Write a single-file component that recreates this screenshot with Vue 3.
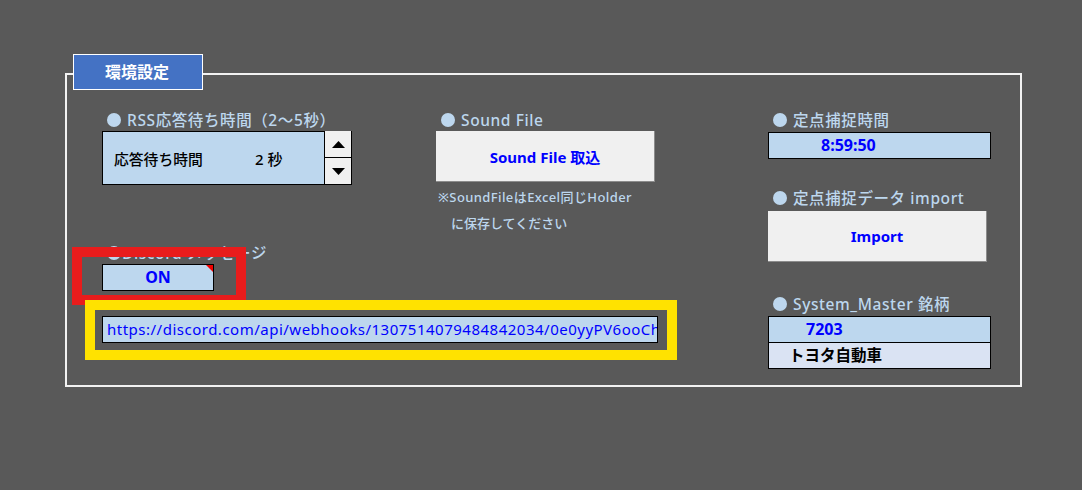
<script setup>
const webhook = 'https://discord.com/api/webhooks/1307514079484842034/0e0yyPV6ooCh'
</script>

<template>
  <div class="page">
    <section class="panel">
      <div class="tab">環境設定</div>

      <div class="col col-rss">
        <div class="label"><i class="dot"></i>RSS応答待ち時間（2～5秒）</div>
        <div class="spin-row">
          <div class="cell spin-value">
            <span class="spin-name">応答待ち時間</span>
            <span class="spin-num">2 秒</span>
          </div>
          <div class="spin-btns">
            <button class="spin-btn"><svg width="13" height="7" viewBox="0 0 13 7"><path d="M6.5 0 L13 7 L0 7 Z" fill="#000" /></svg></button>
            <button class="spin-btn"><svg width="13" height="7" viewBox="0 0 13 7"><path d="M0 0 L13 0 L6.5 7 Z" fill="#000" /></svg></button>
          </div>
        </div>
        <div class="label label-discord"><i class="dot small"></i>Discord メッセージ</div>
        <div class="cell on-cell">ON<i class="comment-mark"></i></div>
        <div class="cell url-cell">{{ webhook }}</div>
      </div>

      <div class="col col-sound">
        <div class="label"><i class="dot"></i>Sound File</div>
        <button class="sheet-btn sound-btn">Sound File 取込</button>
        <p class="note">※SoundFileはExcel同じHolder</p>
        <p class="note note-2">に保存してください</p>
      </div>

      <div class="col col-right">
        <div class="label"><i class="dot"></i>定点捕捉時間</div>
        <div class="cell time-cell">8:59:50</div>
        <div class="label label-import"><i class="dot"></i>定点捕捉データ import</div>
        <button class="sheet-btn import-btn">Import</button>
        <div class="label label-master"><i class="dot"></i>System_Master 銘柄</div>
        <div class="cell code-cell">7203</div>
        <div class="cell name-cell">トヨタ自動車</div>
      </div>

      <div class="mark mark-red"></div>
      <div class="mark mark-yellow"></div>
    </section>
  </div>
</template>

<style scoped>
.page {
  height: 490px;
  padding: 73px 60px 0 65px;
  box-sizing: border-box;
  background: #595959;
  font-family: "Noto Sans", "Noto Sans CJK JP", sans-serif;
  overflow: hidden;
}
.panel {
  position: relative;
  height: 314px;
  box-sizing: border-box;
  padding: 34px 0 0 35px;
  border: 2px solid #f2f2f2;
  display: grid;
  grid-template-columns: 334px 332px 253px;
}
.tab {
  position: absolute;
  left: 6px;
  top: -21px;
  width: 130px;
  height: 36px;
  box-sizing: border-box;
  padding-left: 31px;
  border: 1px solid #fff;
  background: #4472c4;
  color: #fff;
  font-size: 16px;
  font-weight: 700;
  line-height: 34px;
}
.col {
  display: flex;
  flex-direction: column;
  align-items: flex-start;
}
.label {
  display: flex;
  align-items: center;
  height: 21px;
  color: #bdd7ee;
  font-size: 15.5px;
  font-weight: 500;
  letter-spacing: 0.6px;
  white-space: nowrap;
}
.dot {
  width: 14px;
  height: 14px;
  margin: 0 6px 0 5px;
  border-radius: 50%;
  background: #bdd7ee;
  flex: none;
}
.dot.small {
  margin-right: 1px;
}
.cell {
  box-sizing: border-box;
  border: 1px solid #000;
  background: #bdd7ee;
  font-weight: 700;
}
.spin-row {
  display: flex;
  margin-top: 1px;
}
.spin-value {
  width: 223px;
  height: 54px;
  display: flex;
  align-items: center;
  padding-left: 11px;
  color: #000;
  font-size: 14.8px;
  font-weight: 500;
}
.spin-name {
  width: 141px;
}
.spin-num {
  font-size: 15px;
}
.spin-btns {
  width: 27px;
  height: 54px;
  display: flex;
  flex-direction: column;
}
.spin-btn {
  flex: 1;
  padding: 0;
  border: 0;
  border-right: 1px solid #000;
  border-bottom: 1px solid #000;
  background: #f0f0f0;
  display: flex;
  align-items: center;
  justify-content: center;
}
.label-discord {
  margin-top: 57px;
}
.on-cell {
  position: relative;
  width: 112px;
  height: 27px;
  margin-top: 1px;
  color: #0000ff;
  font-size: 16px;
  line-height: 25px;
  text-align: center;
}
.comment-mark {
  position: absolute;
  top: 0;
  right: 0;
  border-style: solid;
  border-width: 0 7px 7px 0;
  border-color: transparent #f00000 transparent transparent;
}
.url-cell {
  width: 556px;
  height: 27px;
  margin-top: 25px;
  padding-left: 4px;
  overflow: hidden;
  color: #0000ff;
  font-size: 15px;
  font-weight: 400;
  letter-spacing: 0.5px;
  line-height: 25px;
  white-space: nowrap;
}
.sheet-btn {
  padding: 0;
  border: 0;
  border-right: 1px solid #8c8c8c;
  border-bottom: 1px solid #8c8c8c;
  background: #f0f0f0;
  color: #0000ff;
  font-family: inherit;
  font-size: 15px;
  font-weight: 700;
}
.sound-btn {
  width: 219px;
  height: 51px;
  margin-top: 1px;
}
.note {
  margin: 8px 0 0 2px;
  color: #bdd7ee;
  font-size: 13px;
  font-weight: 500;
  letter-spacing: 0.4px;
  line-height: 15px;
  white-space: nowrap;
}
.note-2 {
  margin: 11px 0 0 15px;
  letter-spacing: 0;
}
.time-cell {
  width: 223px;
  height: 27px;
  margin-top: 2px;
  padding-left: 52px;
  color: #0000ff;
  font-size: 16px;
  line-height: 25px;
}
.label-import {
  margin-top: 28px;
}
.import-btn {
  width: 219px;
  height: 51px;
  margin-top: 3px;
}
.label-master {
  margin-top: 31px;
}
.code-cell {
  width: 223px;
  height: 27px;
  margin-top: 2px;
  padding-left: 37px;
  color: #0000ff;
  font-size: 16px;
  line-height: 25px;
}
.name-cell {
  width: 223px;
  height: 27px;
  margin-top: -1px;
  padding-left: 20px;
  background: #dae3f3;
  color: #000;
  font-size: 15.5px;
  line-height: 25px;
}
.mark {
  position: absolute;
  box-sizing: border-box;
  border: 10px solid;
}
.mark-red {
  left: 5px;
  top: 172px;
  width: 174px;
  height: 58px;
  border-color: #e81c1c;
}
.mark-yellow {
  left: 18px;
  top: 225px;
  width: 592px;
  height: 60px;
  border-color: #ffe200;
}
</style>
